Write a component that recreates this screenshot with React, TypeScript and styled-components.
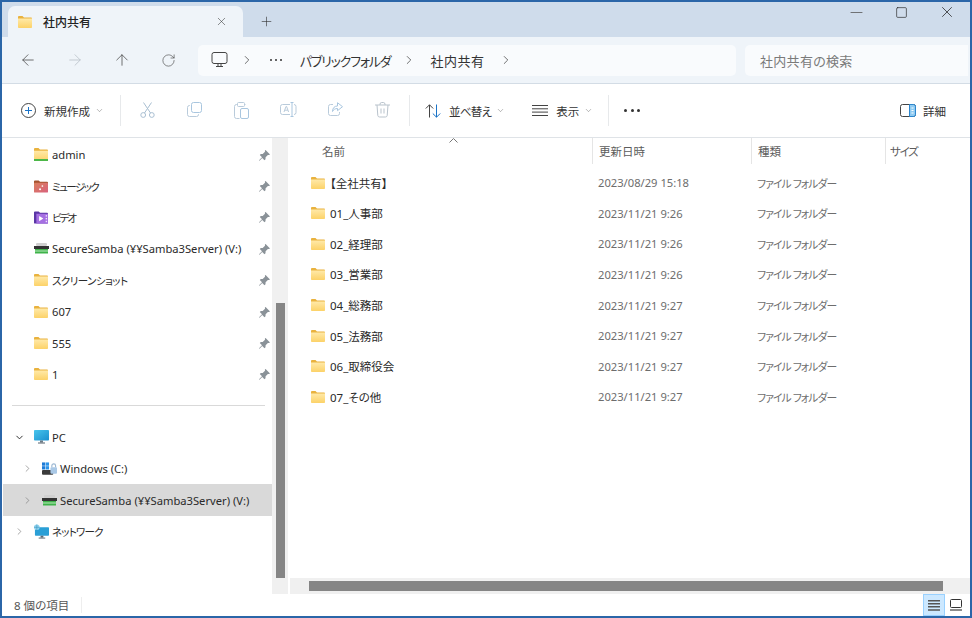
import React from "react";
import styled, { createGlobalStyle } from "styled-components";
import {
  ArrowLeft,
  ArrowRight,
  ArrowUp,
  ChevronDown,
  ChevronRight,
  Minus,
  Plus,
  RotateCw,
  Square,
  X,
} from "lucide-react";

const GlobalStyle = createGlobalStyle`
  html, body { margin: 0; padding: 0; background: #fff; }
  body {
    font-family: "Noto Sans", "Noto Sans CJK JP", sans-serif;
    font-size: 12px;
    color: #1f1f1f;
    font-feature-settings: "palt";
  }
`;

const quickAccess = [
  { name: "admin", icon: "admin" },
  { name: "ミュージック", icon: "music", kana: -1.6 },
  { name: "ビデオ", icon: "video", kana: -2 },
  { name: "SecureSamba (¥¥Samba3Server) (V:)", icon: "drive" },
  { name: "スクリーンショット", icon: "folder", kana: -0.55 },
  { name: "607", icon: "folder" },
  { name: "555", icon: "folder" },
  { name: "1", icon: "folder" },
];

const files = [
  { name: "【全社共有】", date: "2023/08/29 15:18" },
  { name: "01_人事部", date: "2023/11/21 9:26" },
  { name: "02_経理部", date: "2023/11/21 9:26" },
  { name: "03_営業部", date: "2023/11/21 9:26" },
  { name: "04_総務部", date: "2023/11/21 9:27" },
  { name: "05_法務部", date: "2023/11/21 9:27" },
  { name: "06_取締役会", date: "2023/11/21 9:27" },
  { name: "07_その他", date: "2023/11/21 9:27" },
];

const FolderIcon: React.FC<{ stripe?: boolean }> = ({ stripe }) => (
  <svg width="14" height={stripe ? 13 : 12} viewBox="0 0 15 13" preserveAspectRatio="none">
    <defs>
      <linearGradient id="folderFill" x1="0" y1="0" x2="0" y2="1">
        <stop offset="0" stopColor="#ffe9a8" />
        <stop offset="1" stopColor="#fcd268" />
      </linearGradient>
    </defs>
    <path d="M0 1.200C0 .5.5 0 1.200 0h3.600l1.600 1.600h7.400c.7 0 1.200.5 1.200 1.200v1H0z" fill="#e9b23e" />
    <path d="M0 2.800h15v9c0 .7-.5 1.200-1.200 1.200H1.200C.5 13 0 12.500 0 11.800z" fill="url(#folderFill)" />
    {stripe && <rect x="0" y="11" width="15" height="2" fill="#4cb748" />}
  </svg>
);

const MusicIcon = () => (
  <svg width="14" height="13" viewBox="0 0 15 13">
    <defs>
      <linearGradient id="musicFill" x1="0" y1="0" x2="1" y2="1">
        <stop offset="0" stopColor="#d97f5c" />
        <stop offset="1" stopColor="#d9627e" />
      </linearGradient>
    </defs>
    <path d="M0 1c0-.6.4-1 1-1h4l1.500 1.500H14c.6 0 1 .4 1 1V4H0z" fill="#a5522f" />
    <rect x="0" y="2.500" width="15" height="10.500" rx="1" fill="url(#musicFill)" />
    <circle cx="6.500" cy="9.500" r="1.100" fill="#fff" />
    <circle cx="9" cy="6" r=".9" fill="#fff" />
  </svg>
);

const VideoIcon = () => (
  <svg width="14" height="13" viewBox="0 0 15 13">
    <path d="M0 1c0-.6.4-1 1-1h4l1.500 1.500H14c.6 0 1 .4 1 1V12c0 .6-.4 1-1 1H1c-.6 0-1-.4-1-1z" fill="#5a35a5" />
    <rect x="2.500" y="2.500" width="12.500" height="10.500" fill="#a56fe2" />
    <path d="M5.500 5l4.500 2.700-4.500 2.700z" fill="#fff" />
    <rect x="12.500" y="4" width="1.500" height="1.500" fill="#efe4fb" />
    <rect x="12.500" y="7" width="1.500" height="1.500" fill="#efe4fb" />
    <rect x="12.500" y="10" width="1.500" height="1.500" fill="#efe4fb" />
  </svg>
);

const DriveIcon = () => (
  <svg width="15" height="11" viewBox="0 0 15 11">
    <rect x="2" y="0" width="11" height="3" rx="1.200" fill="#d0d0d0" />
    <rect x="0" y="3" width="15" height="3" fill="#333" />
    <rect x="1" y="6" width="13" height="4.500" fill="#3fb34a" />
    <rect x="1" y="7.500" width="13" height="1" fill="#b9eabb" />
  </svg>
);

const WindowsDriveIcon = () => (
  <svg width="16" height="14" viewBox="0 0 16 14">
    <rect x="0" y="0" width="3.500" height="3.500" fill="#1d7bd7" />
    <rect x="4" y="0" width="3.500" height="3.500" fill="#2b93e8" />
    <rect x="0" y="4" width="3.500" height="3.500" fill="#1d7bd7" />
    <rect x="4" y="4" width="3.500" height="3.500" fill="#2b93e8" />
    <rect x="0" y="8" width="12" height="5" rx="1" fill="#3b3b3b" />
    <rect x="9" y="5" width="7" height="7" rx="1" fill="#a9c8e6" />
    <path d="M10.500 5V3.500a2 2 0 0 1 4 0V5" fill="none" stroke="#9bb7d2" strokeWidth="1.200" />
  </svg>
);

const MonitorIcon = () => (
  <svg width="15" height="14" viewBox="0 0 15 14">
    <defs>
      <linearGradient id="pcFill" x1="0" y1="0" x2="1" y2="1">
        <stop offset="0" stopColor="#48c5ec" />
        <stop offset="1" stopColor="#1b8fcf" />
      </linearGradient>
    </defs>
    <rect x="0" y="0" width="15" height="10.500" rx=".8" fill="url(#pcFill)" />
    <rect x="6" y="10.500" width="3" height="2" fill="#6c7a86" />
    <rect x="4" y="12.500" width="7" height="1" fill="#56626c" />
  </svg>
);

const NetworkIcon = () => (
  <svg width="16" height="15" viewBox="0 0 16 15">
    <rect x="1" y="3" width="15" height="9" rx=".8" fill="#2a9fd6" />
    <rect x="7" y="12" width="3" height="2" fill="#5c6a75" />
    <rect x="5" y="14" width="7" height="1" fill="#56626c" />
    <circle cx="3" cy="3" r="3" fill="#8fd3ee" />
    <path d="M0 3h6M3 0v6" stroke="#3b93bd" strokeWidth=".6" />
  </svg>
);

const PinIcon = () => (
  <svg width="11" height="11" viewBox="0 0 11 11">
    <path d="M6.600 0l4.400 4.400-1 .7-1.100-.1-2.300 2.300-.1 1.900-1 1L3.200 8 .5 10.700 0 10.500l.3-.5L3 7.300.8 5.100l1-1 1.900-.1L6 1.700 5.900.6z" fill="#8a9298" />
  </svg>
);

const PcGlyph = () => (
  <svg width="17" height="16" viewBox="0 0 17 16" fill="none" stroke="#444" strokeWidth="1">
    <rect x="1" y=".5" width="15" height="11" rx="2" />
    <path d="M5 14.500h7M7 11.500v3M10 11.500v3" />
  </svg>
);

const ScissorsGlyph = () => (
  <svg width="15" height="16" viewBox="0 0 15 16" fill="none" stroke="#a9bfd2" strokeWidth="1">
    <circle cx="3.200" cy="13" r="2.400" />
    <circle cx="11.800" cy="13" r="2.400" />
    <path d="M4.500 11L11.500 .5M10.500 11L3.500 .5" />
  </svg>
);

const CopyGlyph = () => (
  <svg width="15" height="15" viewBox="0 0 15 15" fill="none" stroke="#b9cbdb" strokeWidth="1">
    <rect x="4.500" y=".5" width="10" height="10" rx="2" stroke="#a9c6df" />
    <path d="M3 3.500H2.500a2 2 0 0 0-2 2v7a2 2 0 0 0 2 2h7a2 2 0 0 0 2-2V12" />
  </svg>
);

const PasteGlyph = () => (
  <svg width="15" height="17" viewBox="0 0 15 17" fill="none" stroke="#b9cbdb" strokeWidth="1">
    <path d="M3.500 2.500h-1a2 2 0 0 0-2 2v10a2 2 0 0 0 2 2h3M11.500 2.500h-1" />
    <rect x="3.500" y=".5" width="7" height="4" rx="1" />
    <rect x="6.500" y="6.500" width="8" height="10" rx="1.500" stroke="#a9c6df" />
  </svg>
);

const RenameGlyph = () => (
  <svg width="17" height="15" viewBox="0 0 17 15" fill="none" stroke="#b9cbdb" strokeWidth="1">
    <path d="M10 2.500H2.500a2 2 0 0 0-2 2v6a2 2 0 0 0 2 2H10M14 2.500a2 2 0 0 1 2 2v6a2 2 0 0 1-2 2" />
    <path d="M4 10l2-5.500h.6L8.600 10M4.800 8.200h3" />
    <path d="M12 .5v14M10.500.5h3M10.500 14.500h3" stroke="#a9c6df" />
  </svg>
);

const ShareGlyph = () => (
  <svg width="15" height="14" viewBox="0 0 15 14" fill="none" stroke="#b9cbdb" strokeWidth="1">
    <path d="M5 2.500H2.500a2 2 0 0 0-2 2v7a2 2 0 0 0 2 2h7a2 2 0 0 0 2-2V10" />
    <path d="M9.500.7l5 4-5 4V6.500c-2.500 0-4 1-5 3 0-3.500 2-5.500 5-5.500z" stroke="#a9c6df" />
  </svg>
);

const TrashGlyph = () => (
  <svg width="15" height="16" viewBox="0 0 15 16" fill="none" stroke="#b9c3cc" strokeWidth="1">
    <path d="M0 3h15M5 3V2.200A1.700 1.700 0 0 1 6.700.5h1.600A1.700 1.700 0 0 1 10 2.200V3" />
    <path d="M2 3l.8 10.500a1.800 1.800 0 0 0 1.800 1.500h5.800a1.800 1.800 0 0 0 1.800-1.500L13 3M6 6.500v5M9 6.500v5" />
  </svg>
);

const NewGlyph = () => (
  <svg width="15" height="15" viewBox="0 0 15 15" fill="none" strokeWidth="1">
    <circle cx="7.500" cy="7.500" r="7" stroke="#444" />
    <path d="M7.500 4v7M4 7.500h7" stroke="#1a73c7" />
  </svg>
);

const SortGlyph = () => (
  <svg width="16" height="14" viewBox="0 0 16 14" fill="none" strokeWidth="1">
    <path d="M4.500 13.500V.8M.8 4.500L4.500.8l3.700 3.700" stroke="#444" />
    <path d="M11.500.5v12.700M7.800 9.500l3.700 3.700 3.700-3.700" stroke="#1a73c7" />
  </svg>
);

const LinesGlyph = () => (
  <svg width="16" height="11" viewBox="0 0 16 11" stroke="#444" strokeWidth="1">
    <path d="M0 .5h16M0 3.800h16M0 7.100h16M0 10.500h16" />
  </svg>
);

const DetailsGlyph = () => (
  <svg width="16" height="13" viewBox="0 0 16 13" fill="none" strokeWidth="1">
    <rect x=".5" y=".5" width="15" height="12" rx="2" stroke="#444" />
    <path d="M9.500.5h4a2 2 0 0 1 2 2v8a2 2 0 0 1-2 2h-4z" fill="#8fcbf2" stroke="#2b86cf" />
    <path d="M11.500 4h2M11.500 6.500h2M11.500 9h2" stroke="#fff" />
  </svg>
);

const ListViewGlyph = () => (
  <svg width="12" height="11" viewBox="0 0 12 11" stroke="#555" strokeWidth="1.500">
    <path d="M0 .8h12M0 3.800h12M0 6.800h12M0 9.900h12" />
  </svg>
);

const PreviewGlyph = () => (
  <svg width="12" height="12" viewBox="0 0 12 12" fill="none" stroke="#333" strokeWidth="1">
    <rect x=".5" y=".5" width="11" height="8" rx="1" />
    <path d="M0 11h12" strokeWidth="1.500" stroke="#666" />
  </svg>
);

const SidebarIcon: React.FC<{ kind: string }> = ({ kind }) => {
  switch (kind) {
    case "admin":
      return <FolderIcon stripe />;
    case "music":
      return <MusicIcon />;
    case "video":
      return <VideoIcon />;
    case "drive":
      return <DriveIcon />;
    default:
      return <FolderIcon />;
  }
};

const App: React.FC = () => {
  return (
    <>
      <GlobalStyle />
      <Window>
        <TitleBar>
          <Tab>
            <FolderIcon />
            <TabTitle>社内共有</TabTitle>
            <X size={13} strokeWidth={1} color="#333" />
          </Tab>
          <NewTab>
            <Plus size={15} strokeWidth={1} color="#333" />
          </NewTab>
          <WindowControls>
            <ControlSlot>
              <Minus size={19} strokeWidth={1} color="#555" />
            </ControlSlot>
            <ControlSlot>
              <Square size={13} strokeWidth={1.2} color="#222" />
            </ControlSlot>
            <ControlSlot>
              <X size={18} strokeWidth={1} color="#222" />
            </ControlSlot>
          </WindowControls>
        </TitleBar>

        <NavBar>
          <NavButtons>
            <NavButton>
              <ArrowLeft size={18} strokeWidth={1} color="#444" />
            </NavButton>
            <NavButton>
              <ArrowRight size={18} strokeWidth={1} color="#b4bcc4" />
            </NavButton>
            <NavButton>
              <ArrowUp size={18} strokeWidth={1} color="#444" />
            </NavButton>
            <NavButton>
              <RotateCw size={15} strokeWidth={1} color="#444" />
            </NavButton>
          </NavButtons>
          <AddressBox>
            <PcGlyph />
            <Crumb $left={12}>
              <ChevronRight size={16} strokeWidth={1.2} color="#333" />
            </Crumb>
            <CrumbDots>
              <Dot $size={2} />
              <Dot $size={2} />
              <Dot $size={2} />
            </CrumbDots>
            <CrumbText $left={18} $spacing={-1.2}>パブリックフォルダ</CrumbText>
            <Crumb $left={12}>
              <ChevronRight size={16} strokeWidth={1.2} color="#333" />
            </Crumb>
            <CrumbText $left={14}>社内共有</CrumbText>
            <Crumb $left={15}>
              <ChevronRight size={16} strokeWidth={1.2} color="#333" />
            </Crumb>
          </AddressBox>
          <SearchBox>社内共有の検索</SearchBox>
        </NavBar>

        <Toolbar>
          <ToolLabelGroup $left={19}>
            <NewGlyph />
            <ToolText>新規作成</ToolText>
            <ToolChevron>
              <ChevronDown size={9} strokeWidth={1} color="#444" />
            </ToolChevron>
          </ToolLabelGroup>
          <ToolDivider $left={16} />
          <ToolIconGroup>
            <ToolSlot><ScissorsGlyph /></ToolSlot>
            <ToolSlot><CopyGlyph /></ToolSlot>
            <ToolSlot><PasteGlyph /></ToolSlot>
            <ToolSlot><RenameGlyph /></ToolSlot>
            <ToolSlot><ShareGlyph /></ToolSlot>
            <ToolSlot><TrashGlyph /></ToolSlot>
          </ToolIconGroup>
          <ToolDivider $left={3} />
          <ToolLabelGroup $left={15}>
            <SortGlyph />
            <ToolText $tight>並べ替え</ToolText>
            <ToolChevron>
              <ChevronDown size={9} strokeWidth={1} color="#444" />
            </ToolChevron>
          </ToolLabelGroup>
          <ToolLabelGroup $left={27}>
            <LinesGlyph />
            <ToolText>表示</ToolText>
            <ToolChevron>
              <ChevronDown size={9} strokeWidth={1} color="#444" />
            </ToolChevron>
          </ToolLabelGroup>
          <ToolDivider $left={15} />
          <MoreDots>
            <Dot $size={3} />
            <Dot $size={3} />
            <Dot $size={3} />
          </MoreDots>
          <DetailsButton>
            <DetailsGlyph />
            <ToolText>詳細</ToolText>
          </DetailsButton>
        </Toolbar>

        <Main>
          <Sidebar>
            <SideList>
              {quickAccess.map((item) => (
                <SideRow key={item.name} $indent={12}>
                  <ChevronSlot />
                  <IconSlot>
                    <SidebarIcon kind={item.icon} />
                  </IconSlot>
                  <SideLabel $kana={item.kana}>{item.name}</SideLabel>
                  <PinSlot>
                    <PinIcon />
                  </PinSlot>
                </SideRow>
              ))}
            </SideList>
            <SideDivider />
            <SideList>
              <SideRow $indent={12}>
                <ChevronSlot>
                  <ChevronDown size={11} strokeWidth={2} color="#222" />
                </ChevronSlot>
                <IconSlot><MonitorIcon /></IconSlot>
                <SideLabel>PC</SideLabel>
              </SideRow>
              <SideRow $indent={20}>
                <ChevronSlot>
                  <ChevronRight size={11} strokeWidth={1.4} color="#777" />
                </ChevronSlot>
                <IconSlot><WindowsDriveIcon /></IconSlot>
                <SideLabel>Windows (C:)</SideLabel>
              </SideRow>
              <SideRow $indent={20} $selected>
                <ChevronSlot>
                  <ChevronRight size={11} strokeWidth={1.4} color="#777" />
                </ChevronSlot>
                <IconSlot><DriveIcon /></IconSlot>
                <SideLabel>SecureSamba (¥¥Samba3Server) (V:)</SideLabel>
              </SideRow>
              <SideRow $indent={12}>
                <ChevronSlot>
                  <ChevronRight size={11} strokeWidth={1.4} color="#777" />
                </ChevronSlot>
                <IconSlot><NetworkIcon /></IconSlot>
                <SideLabel $kana={-0.8}>ネットワーク</SideLabel>
              </SideRow>
            </SideList>
          </Sidebar>
          <VerticalTrack>
            <VerticalThumb />
          </VerticalTrack>

          <Content>
            <ColumnHeader>
              <SortCaret>
                <svg width="9" height="5" viewBox="0 0 9 5" fill="none" stroke="#777" strokeWidth="1">
                  <path d="M.5 4.500l4-4 4 4" />
                </svg>
              </SortCaret>
              <HeaderCell $pad={32}>名前</HeaderCell>
              <HeaderCell $divider>更新日時</HeaderCell>
              <HeaderCell $divider>種類</HeaderCell>
              <HeaderCell $divider $kana>サイズ</HeaderCell>
            </ColumnHeader>
            <FileList>
              {files.map((file) => (
                <FileRow key={file.name}>
                  <NameCell>
                    <FolderIcon />
                    <span>{file.name}</span>
                  </NameCell>
                  <MetaCell>{file.date}</MetaCell>
                  <TypeCell>ファイル フォルダー</TypeCell>
                </FileRow>
              ))}
            </FileList>
            <HorizontalTrack>
              <HorizontalThumb />
            </HorizontalTrack>
          </Content>
        </Main>

        <StatusBar>
          <StatusText>8 個の項目</StatusText>
          <ViewButtons>
            <ViewButton $active>
              <ListViewGlyph />
            </ViewButton>
            <ViewButton>
              <PreviewGlyph />
            </ViewButton>
          </ViewButtons>
        </StatusBar>
      </Window>
    </>
  );
};

export default App;

const Window = styled.div`
  width: 972px;
  height: 618px;
  box-sizing: border-box;
  border: 2px solid #2b66a8;
  background: #fff;
  display: flex;
  flex-direction: column;
  overflow: hidden;
`;

const TitleBar = styled.div`
  height: 35px;
  flex: none;
  background: #cfdceb;
  display: flex;
  align-items: flex-end;
  padding-left: 6px;
`;

const Tab = styled.div`
  width: 235px;
  height: 31px;
  box-sizing: border-box;
  background: #eff4f9;
  border-radius: 7px 7px 0 0;
  display: flex;
  align-items: center;
  padding: 0 15px 0 10px;
`;

const TabTitle = styled.span`
  flex: 1;
  margin-left: 11px;
  font-weight: 500;
  color: #222;
`;

const NewTab = styled.div`
  width: 46px;
  height: 31px;
  display: flex;
  align-items: center;
  justify-content: center;
`;

const WindowControls = styled.div`
  margin-left: auto;
  align-self: flex-start;
  display: flex;
  padding: 2px 1px 0 0;
`;

const ControlSlot = styled.div`
  width: 45px;
  height: 16px;
  display: flex;
  align-items: center;
  justify-content: center;
`;

const NavBar = styled.div`
  height: 47px;
  flex: none;
  box-sizing: border-box;
  background: #eff4f9;
  border-bottom: 1px solid #d3dce5;
  display: flex;
  align-items: flex-start;
  padding-top: 8px;
`;

const NavButtons = styled.div`
  width: 196px;
  height: 31px;
  padding: 0 0 1px 2px;
  box-sizing: border-box;
  display: flex;
  align-items: center;
`;

const NavButton = styled.div`
  width: 47px;
  display: flex;
  justify-content: center;
`;

const AddressBox = styled.div`
  width: 538px;
  height: 31px;
  box-sizing: border-box;
  background: #f9fbfd;
  border-radius: 5px;
  display: flex;
  align-items: center;
  padding: 0 0 1px 13px;
`;

const Crumb = styled.div<{ $left: number }>`
  width: 14px;
  display: flex;
  justify-content: center;
  margin-left: ${(props) => props.$left}px;
`;

const CrumbDots = styled.div`
  width: 12px;
  margin-left: 16px;
  display: flex;
  justify-content: space-between;
`;

const CrumbText = styled.span<{ $left: number; $spacing?: number }>`
  margin-left: ${(props) => props.$left}px;
  font-size: 13px;
  letter-spacing: ${(props) => props.$spacing ?? 0.5}px;
  color: #333;
`;

const SearchBox = styled.div`
  width: 223px;
  height: 31px;
  margin-left: 9px;
  box-sizing: border-box;
  background: #f9fbfd;
  border-radius: 5px 0 0 5px;
  padding: 0 0 1px 15px;
  display: flex;
  align-items: center;
  color: #7a7a7a;
  font-size: 13px;
  letter-spacing: 0.3px;
`;

const Toolbar = styled.div`
  height: 54px;
  flex: none;
  box-sizing: border-box;
  background: #fff;
  border-bottom: 1px solid #dfe3e7;
  display: flex;
  align-items: center;
`;

const ToolLabelGroup = styled.div<{ $left: number }>`
  display: flex;
  align-items: center;
  gap: 8px;
  margin-left: ${(props) => props.$left}px;
`;

const ToolText = styled.span<{ $tight?: boolean }>`
  font-size: 11.500px;
  letter-spacing: ${(props) => (props.$tight ? "-0.7px" : "0")};
  color: #333;
`;

const ToolChevron = styled.span`
  display: flex;
  margin-left: -3px;
`;

const ToolDivider = styled.div<{ $left: number }>`
  width: 1px;
  height: 31px;
  background: #e7e9eb;
  margin-left: ${(props) => props.$left}px;
`;

const ToolIconGroup = styled.div`
  display: flex;
  margin-left: 3px;
`;

const ToolSlot = styled.div`
  width: 47px;
  display: flex;
  justify-content: center;
`;

const MoreDots = styled.div`
  display: flex;
  gap: 3.500px;
  margin-left: 15px;
`;

const Dot = styled.span<{ $size: number }>`
  width: ${(props) => props.$size}px;
  height: ${(props) => props.$size}px;
  border-radius: 50%;
  background: #333;
`;

const DetailsButton = styled.div`
  margin-left: auto;
  margin-right: 24px;
  display: flex;
  align-items: center;
  gap: 7px;
`;

const Main = styled.div`
  flex: 1;
  min-height: 0;
  display: flex;
`;

const Sidebar = styled.div`
  width: 270px;
  flex: none;
  padding: 1px 0 0 1px;
  box-sizing: border-box;
`;

const SideList = styled.div`
  display: flex;
  flex-direction: column;
`;

const SideRow = styled.div<{ $indent: number; $selected?: boolean }>`
  height: 31.400px;
  box-sizing: border-box;
  display: flex;
  align-items: center;
  padding-left: ${(props) => props.$indent - 1}px;
  background: ${(props) => (props.$selected ? "#d9d9d9" : "transparent")};
`;

const ChevronSlot = styled.div`
  width: 20px;
  flex: none;
  display: flex;
  align-items: center;
`;

const IconSlot = styled.div`
  width: 15px;
  height: 15px;
  flex: none;
  margin-right: 3px;
  display: flex;
  align-items: center;
  justify-content: flex-start;
`;

const SideLabel = styled.span<{ $kana?: number }>`
  flex: 1;
  font-size: ${(props) => (props.$kana ? "10.500px" : "11.200px")};
  letter-spacing: ${(props) => props.$kana ?? 0}px;
  color: #2a2a2a;
  white-space: nowrap;
`;

const PinSlot = styled.div`
  width: 11px;
  height: 11px;
  margin: 0 2px 3px 0;
`;

const SideDivider = styled.div`
  height: 1px;
  background: #d9d9d9;
  margin: 15px 7px 15.500px 9px;
`;

const VerticalTrack = styled.div`
  width: 16px;
  flex: none;
  height: 456px;
  background: #f0f0f0;
  padding: 165px 3px 0 4px;
  box-sizing: border-box;
  display: flex;
`;

const VerticalThumb = styled.div`
  flex: 1;
  height: 275px;
  background: #858585;
`;

const Content = styled.div`
  flex: 1;
  min-width: 0;
  margin-left: 2px;
  display: flex;
  flex-direction: column;
`;

const ColumnHeader = styled.div`
  position: relative;
  height: 26px;
  flex: none;
  display: grid;
  grid-template-columns: 302px 159px 134px 1fr;
`;

const SortCaret = styled.div`
  position: absolute;
  left: 159px;
  top: 0;
  line-height: 0;
`;

const HeaderCell = styled.div<{ $divider?: boolean; $pad?: number; $kana?: boolean }>`
  display: flex;
  align-items: center;
  padding-left: ${(props) => props.$pad ?? (props.$kana ? 4 : 6)}px;
  color: #5c5c5c;
  font-size: 11.500px;
  letter-spacing: ${(props) => (props.$kana ? "-1.2px" : "0")};
  box-sizing: border-box;
  ${(props) => (props.$divider ? "border-left: 1px solid #e5e5e5;" : "")}
`;

const FileList = styled.div`
  flex: 1;
  padding-top: 3.500px;
  display: flex;
  flex-direction: column;
`;

const FileRow = styled.div`
  height: 30.570px;
  flex: none;
  display: grid;
  grid-template-columns: 302px 159px 134px;
  align-items: center;
`;

const NameCell = styled.div`
  display: flex;
  align-items: center;
  gap: 5px;
  padding-left: 21px;
  font-size: 11.500px;
  color: #2a2a2a;
`;

const MetaCell = styled.div`
  padding-left: 6px;
  font-size: 11.200px;
  color: #6d6d6d;
`;

const TypeCell = styled(MetaCell)`
  font-size: 10.800px;
  letter-spacing: -0.9px;
`;

const HorizontalTrack = styled.div`
  height: 16px;
  flex: none;
  background: #f0f0f0;
  padding: 3px 0 3px 19px;
  box-sizing: border-box;
  display: flex;
`;

const HorizontalThumb = styled.div`
  width: 634px;
  background: #858585;
`;

const StatusBar = styled.div`
  height: 22px;
  flex: none;
  display: flex;
  align-items: center;
  justify-content: space-between;
`;

const StatusText = styled.span`
  margin-left: 12px;
  padding-right: 12px;
  border-right: 1px solid #eee;
  font-size: 11.500px;
  color: #555;
`;

const ViewButtons = styled.div`
  display: flex;
  align-self: stretch;
  margin-right: 3px;
`;

const ViewButton = styled.div<{ $active?: boolean }>`
  width: 22px;
  box-sizing: border-box;
  display: flex;
  align-items: center;
  justify-content: center;
  background: ${(props) => (props.$active ? "#cce8ff" : "transparent")};
  border: 1px solid ${(props) => (props.$active ? "#99d1ff" : "transparent")};
`;
